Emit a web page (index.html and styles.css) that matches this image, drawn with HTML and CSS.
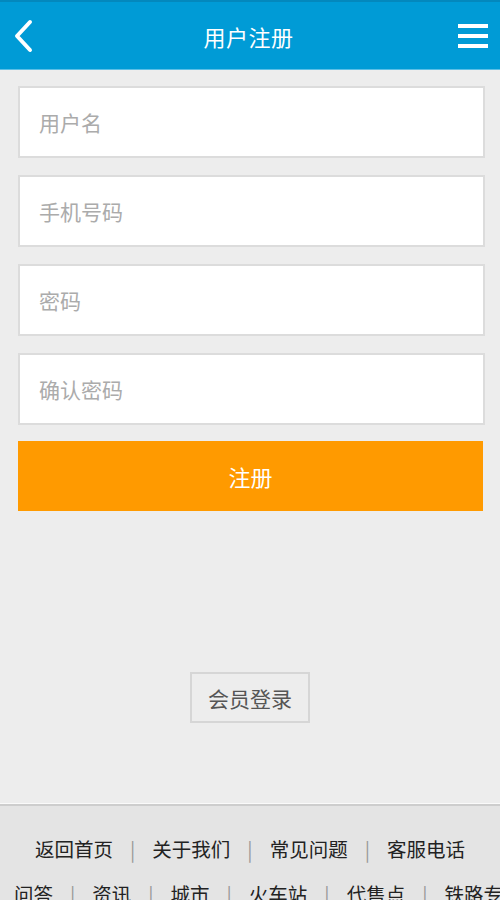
FILE: index.html
```html
<!DOCTYPE html>
<html lang="zh-CN">
<head>
    <meta charset="UTF-8">
    <meta name="viewport" content="width=device-width, initial-scale=1.0">
    <title>用户注册</title>
    <link rel="stylesheet" href="styles.css">
</head>
<body>
    <header class="header">
        <a class="header-btn back" href="#">
            <svg width="24" height="34" viewBox="0 0 24 34" fill="none" stroke="#fff" stroke-width="4" stroke-linecap="round" stroke-linejoin="round">
                <polyline points="18,3 5,17 18,31"></polyline>
            </svg>
        </a>
        <h1>用户注册</h1>
        <a class="header-btn menu" href="#">
            <svg width="30" height="28" viewBox="0 0 30 28" fill="#fff">
                <rect x="0" y="2" width="30" height="4"></rect>
                <rect x="0" y="12" width="30" height="4"></rect>
                <rect x="0" y="22" width="30" height="4"></rect>
            </svg>
        </a>
    </header>

    <main class="main">
        <form class="form">
            <div class="fields">
                <input class="field" type="text" placeholder="用户名">
                <input class="field" type="tel" placeholder="手机号码">
                <input class="field" type="password" placeholder="密码">
                <input class="field" type="password" placeholder="确认密码">
            </div>
            <button class="submit" type="button">注册</button>
        </form>
        <div class="login">
            <a class="login-btn" href="#">会员登录</a>
        </div>
    </main>

    <footer class="footer">
        <ul class="links">
            <li><a href="#">返回首页</a></li>
            <li><a href="#">关于我们</a></li>
            <li><a href="#">常见问题</a></li>
            <li><a href="#">客服电话</a></li>
        </ul>
        <ul class="links left">
            <li><a href="#">问答</a></li>
            <li><a href="#">资讯</a></li>
            <li><a href="#">城市</a></li>
            <li><a href="#">火车站</a></li>
            <li><a href="#">代售点</a></li>
            <li><a href="#">铁路专题</a></li>
        </ul>
    </footer>
</body>
</html>
```

FILE: styles.css
```css
* {
    margin: 0;
    padding: 0;
    box-sizing: border-box;
    font-family: "Noto Sans CJK SC", "Noto Sans", sans-serif;
}

html, body {
    height: 900px;
    overflow: hidden;
}

body {
    background: #ededed;
    color: #333;
}

a {
    text-decoration: none;
    color: inherit;
}

.header {
    height: 70px;
    background: #009bd6;
    border-top: 2px solid #0388bd;
    border-bottom: 1px solid #5cbfe6;
    display: flex;
    align-items: center;
    justify-content: space-between;
    padding: 0 12px 0 9px;
}

.header h1 {
    color: #fff;
    font-size: 22px;
    font-weight: 400;
    letter-spacing: 0.5px;
}

.header-btn {
    display: flex;
    align-items: center;
    justify-content: center;
    width: 30px;
    height: 40px;
}

.main {
    height: 734px;
}

.form {
    padding: 16px 15px 0 18px;
}

.fields {
    display: flex;
    flex-direction: column;
    gap: 17px;
}

.field {
    display: block;
    width: 100%;
    height: 72px;
    background: #fff;
    border: 2px solid #dcdcdc;
    padding: 0 19px;
    font-size: 21px;
    color: #333;
    outline: none;
}

.field::placeholder {
    color: #ababab;
}

.submit {
    display: block;
    width: 465px;
    height: 70px;
    margin-top: 16px;
    background: #ff9a00;
    border: none;
    color: #fff;
    font-size: 22px;
    cursor: pointer;
}

.login {
    display: flex;
    justify-content: center;
    margin-top: 161px;
}

.login-btn {
    display: flex;
    align-items: center;
    justify-content: center;
    width: 120px;
    height: 51px;
    border: 2px solid #d6d6d6;
    color: #555;
    font-size: 21px;
}

.footer {
    background: #e4e4e4;
    border-top: 2px solid #cdcdcd;
    box-shadow: 0 -1px 0 #fafafa;
    padding-top: 25px;
}

.links {
    list-style: none;
    display: flex;
    justify-content: center;
    white-space: nowrap;
    font-size: 19.5px;
    line-height: 36px;
    color: #222;
}

.links.left {
    justify-content: flex-start;
    padding-left: 14px;
    margin-top: 9px;
}

.links li + li::before {
    content: "|";
    color: #999;
    margin: 0 17px;
}
```
